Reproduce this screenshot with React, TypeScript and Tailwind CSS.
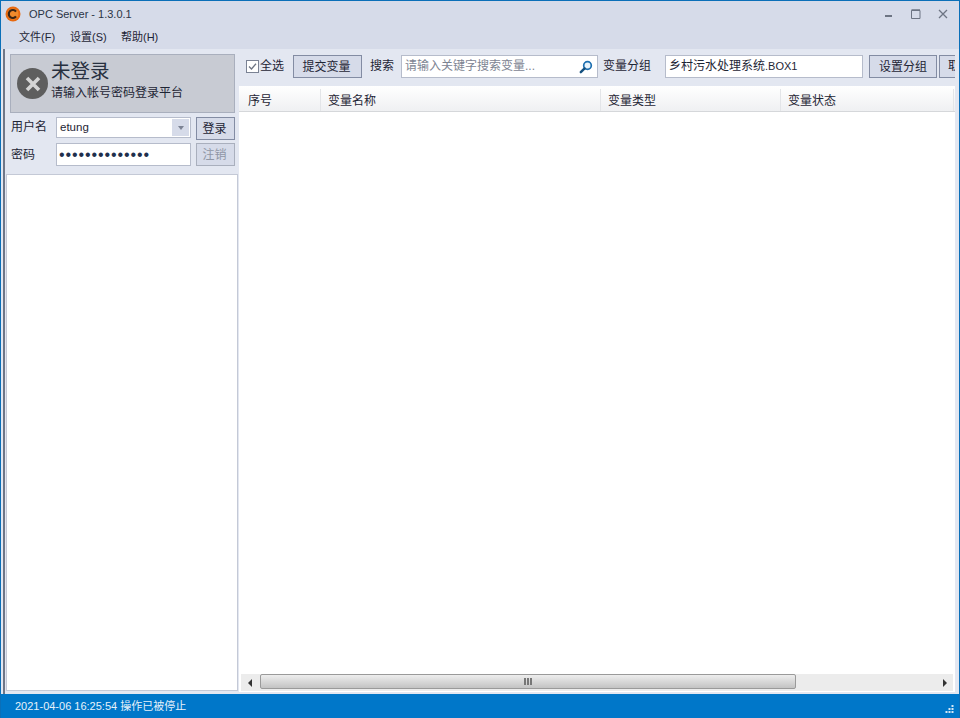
const font = "[font-family:'Liberation_Sans','Noto_Sans_CJK_SC',sans-serif]";

const columns = [
  { title: "序号", width: "w-[82px] pl-[9px]" },
  { title: "变量名称", width: "w-[280px] pl-[7px]" },
  { title: "变量类型", width: "w-[180px] pl-[7px]" },
  { title: "变量状态", width: "w-[173px] pl-[7px]" },
];

function Logo() {
  return (
    <svg width="16" height="16" viewBox="0 0 16 16">
      <circle cx="8" cy="8" r="7.5" fill="#e8690f" />
      <circle cx="8" cy="8" r="5.5" fill="#f08a2c" />
      <path d="M11 5.6A4 4 0 1 0 11 10.4" fill="none" stroke="#3a2415" strokeWidth="2.2" />
    </svg>
  );
}

function SearchIcon() {
  return (
    <svg width="14" height="14" viewBox="0 0 14 14">
      <circle cx="8.5" cy="5.5" r="3.8" fill="#e8f3fb" stroke="#1d6fb0" strokeWidth="1.7" />
      <path d="M5.6 8.4 1.8 12.2" stroke="#14507f" strokeWidth="2.4" strokeLinecap="round" />
    </svg>
  );
}

function WindowControls() {
  return (
    <div className="ml-auto flex items-center pr-[11px] text-[#6d7483]">
      <svg width="7" height="10" viewBox="0 0 7 10" fill="currentColor">
        <rect x="0" y="6" width="7" height="2" />
      </svg>
      <svg width="10" height="10" viewBox="0 0 10 10" fill="none" stroke="currentColor" className="ml-[19px]">
        <path d="M.5 1.5h8.5v8h-8.5z" />
        <path d="M.5 1h8.5" strokeWidth="1.5" />
      </svg>
      <svg width="10" height="10" viewBox="0 0 10 10" fill="none" stroke="currentColor" strokeWidth="1.3" className="ml-[17px]">
        <path d="M1 1l8 8M9 1l-8 8" />
      </svg>
    </div>
  );
}

function ToolButton({ label, className }: { label: string; className: string }) {
  return (
    <button className={`h-[23px] shrink-0 bg-[#d6dbe9] border border-[#838ca3] text-[12px] text-[#1e2535] ${className}`}>
      {label}
    </button>
  );
}

export default function App() {
  return (
    <div className={`${font} w-[960px] h-[718px] flex flex-col bg-[#d6dbe9] border-x border-t border-[#0b6fb8] text-[#1e2535] overflow-hidden`}>
      <div className="h-[26px] flex items-center pl-[4px] shrink-0">
        <Logo />
        <span className="ml-[8px] text-[11px] text-[#2b3445]">OPC Server - 1.3.0.1</span>
        <WindowControls />
      </div>

      <div className="h-[22px] flex items-center pl-[18px] pb-[2px] text-[11px] shrink-0">
        <span className="w-[51px]">文件(F)</span>
        <span className="w-[51px]">设置(S)</span>
        <span className="w-[51px]">帮助(H)</span>
      </div>

      <div className="flex-1 flex min-h-0 bg-[#e3e7f1]">
        <div className="w-[235px] shrink-0 border-l-2 border-[#6f7788] ml-[2px] pl-[1px] flex flex-col pb-[3px] bg-[#e3e7f1]">
          <div className="mt-[5px] ml-[4px] mr-[3px] h-[59px] bg-[#c8cbd3] border border-[#a9afbd] flex items-center pl-[6px]">
            <div className="w-[31px] h-[31px] rounded-full bg-[#5e5e5e] flex items-center justify-center shrink-0">
              <svg width="18" height="18" viewBox="0 0 18 18" fill="none" stroke="#d4d4d4" strokeWidth="3.6">
                <path d="M3 3l12 12M15 3L3 15" />
              </svg>
            </div>
            <div className="ml-[3px] -mt-[8px]">
              <div className="text-[19.5px] leading-[26px] text-[#27303f]">未登录</div>
              <div className="text-[12px] leading-[18px]">请输入帐号密码登录平台</div>
            </div>
          </div>

          <div className="mt-[4px] ml-[4px] mr-[3px] flex items-start h-[23px]">
            <span className="w-[46px] pl-[1px] text-[12px] leading-[21px]">用户名</span>
            <div className="w-[135px] h-[21px] bg-white border border-[#b6bccb] flex items-center pl-[3px] text-[11.5px]">
              etung
              <div className="ml-auto mr-[1px] w-[17px] h-[17px] bg-[#d6dbe9] flex items-center justify-center">
                <div className="border-x-[3.5px] border-t-[4px] border-x-transparent border-t-[#7c8394]" />
              </div>
            </div>
            <ToolButton label="登录" className="ml-[5px] w-[39px] pr-[2px]" />
          </div>

          <div className="mt-[3px] ml-[4px] mr-[3px] flex items-center h-[23px]">
            <span className="w-[46px] pl-[1px] text-[12px]">密码</span>
            <div className="w-[135px] h-[23px] bg-white border border-[#b6bccb] flex items-center pl-[2px] text-[16px] tracking-[0.9px] text-[#1f2f4d]">
              ••••••••••••••
            </div>
            <button className="ml-[5px] w-[39px] h-[23px] pr-[2px] bg-[#d6dbe9] border border-[#a9afbd] text-[12px] text-[#8f96a5]">
              注销
            </button>
          </div>

          <div className="mt-[8px] flex-1 bg-white border border-[#c4c9d6]" />
        </div>

        <div className="flex-1 min-w-0 flex flex-col pl-[1px] pr-[4px] bg-[#e3e7f1]">
          <div className="h-[37px] shrink-0 flex items-start text-[12px] pt-[6px] leading-[23px] overflow-hidden whitespace-nowrap">
            <div className="ml-[7px] mt-[5px] w-[13px] h-[13px] shrink-0 bg-white border border-[#7a8294] flex items-center justify-center">
              <svg width="9" height="9" viewBox="0 0 9 9">
                <path d="M1 4.5 3.5 7 8 1.8" fill="none" stroke="#6d7483" strokeWidth="1.3" />
              </svg>
            </div>
            <span className="ml-[1px] shrink-0">全选</span>
            <ToolButton label="提交变量" className="ml-[9px] w-[69px] pr-[2px]" />
            <span className="ml-[8px] shrink-0">搜索</span>
            <div className="ml-[7px] w-[197px] h-[23px] shrink-0 bg-white border border-[#b6bccb] flex items-center pl-[3px] text-[#7d8492]">
              请输入关键字搜索变量...
              <span className="ml-auto mr-[4px]"><SearchIcon /></span>
            </div>
            <span className="ml-[5px] shrink-0">变量分组</span>
            <div className="ml-[14px] w-[198px] h-[23px] shrink-0 bg-white border border-[#b6bccb] flex items-center pl-[3px]">
              乡村污水处理系统<span className="text-[11px]">.BOX1</span>
            </div>
            <ToolButton label="设置分组" className="ml-[6px] w-[68px]" />
            <div className="ml-[2px] w-[17px] h-[23px] shrink-0 bg-[#d6dbe9] border-y border-l border-[#838ca3] overflow-hidden pl-[8px] leading-[21px]">
              取消
            </div>
          </div>

          <div className="flex-1 min-h-0 bg-white flex flex-col mb-[2px]">
            <div className="h-[26px] flex shrink-0 border-b border-[#d5d7da] bg-gradient-to-b from-white to-[#eff0f2] text-[12px]">
              {columns.map((col) => (
                <div key={col.title} className={`${col.width} mt-[3px] pt-[2px] flex items-center border-r border-[#e3e5e8]`}>
                  {col.title}
                </div>
              ))}
            </div>
            <div className="flex-1" />
            <div className="h-[17px] mx-[2px] mb-[1px] flex items-center bg-[#ececec] shrink-0">
              <div className="w-[17px] flex justify-center">
                <div className="border-y-[4px] border-r-[4px] border-y-transparent border-r-[#333]" />
              </div>
              <div className="ml-[2px] w-[536px] h-[15px] self-start rounded-[2px] border border-[#9a9a9a] bg-gradient-to-b from-[#eeeeee] to-[#c3c3c3] flex items-center justify-center gap-[1px]">
                <span className="w-[2px] h-[7px] bg-[#777]" />
                <span className="w-[2px] h-[7px] bg-[#777]" />
                <span className="w-[2px] h-[7px] bg-[#777]" />
              </div>
              <div className="ml-auto w-[17px] flex justify-center">
                <div className="border-y-[4px] border-l-[4px] border-y-transparent border-l-[#333]" />
              </div>
            </div>
          </div>
        </div>
      </div>

      <div className="h-[24px] shrink-0 -mx-px bg-[#0077c9] flex items-center pl-[15px] pr-[6px] text-[11px] text-[#e6f1fa]">
        2021-04-06 16:25:54 操作已被停止
        <svg width="9" height="9" viewBox="0 0 9 9" className="ml-auto mt-[6px]" fill="#d5e8f6">
          <rect x="6.5" y="0" width="2" height="2" />
          <rect x="3.5" y="3" width="2" height="2" />
          <rect x="6.5" y="3" width="2" height="2" />
          <rect x="0.5" y="6" width="2" height="2" />
          <rect x="3.5" y="6" width="2" height="2" />
          <rect x="6.5" y="6" width="2" height="2" />
        </svg>
      </div>
    </div>
  );
}
